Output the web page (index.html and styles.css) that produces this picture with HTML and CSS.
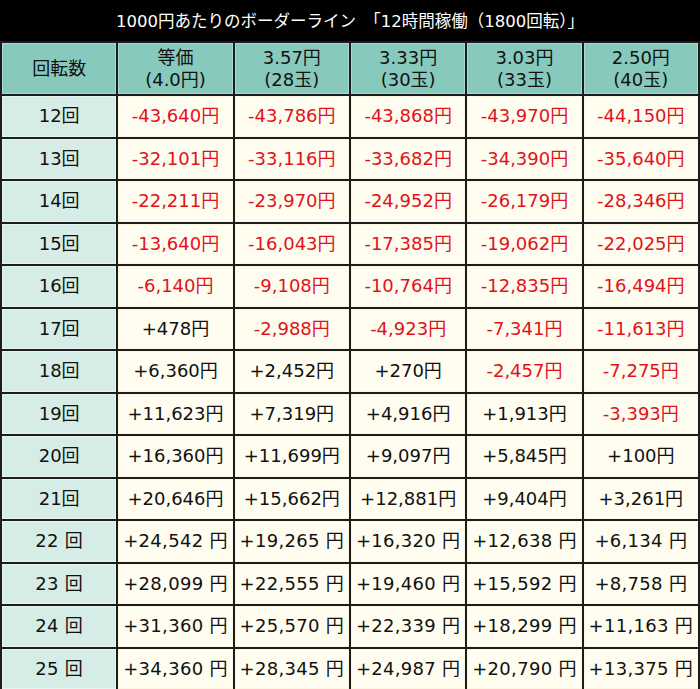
FILE: index.html
```html
<!DOCTYPE html>
<html lang="ja">
<head>
<meta charset="utf-8">
<link rel="stylesheet" href="styles.css">
</head>
<body>
<div class="wrap">
  <div class="title">1000円あたりのボーダーライン　「12時間稼働（1800回転）」</div>
  <table class="border">
    <thead>
      <tr>
        <th>回転数</th>
        <th>等価<br>(4.0円)</th>
        <th>3.57円<br>(28玉)</th>
        <th>3.33円<br>(30玉)</th>
        <th>3.03円<br>(33玉)</th>
        <th>2.50円<br>(40玉)</th>
      </tr>
    </thead>
    <tbody>
      <tr><td class="rot">12回</td><td class="neg">-43,640円</td><td class="neg">-43,786円</td><td class="neg">-43,868円</td><td class="neg">-43,970円</td><td class="neg">-44,150円</td></tr>
      <tr><td class="rot">13回</td><td class="neg">-32,101円</td><td class="neg">-33,116円</td><td class="neg">-33,682円</td><td class="neg">-34,390円</td><td class="neg">-35,640円</td></tr>
      <tr><td class="rot">14回</td><td class="neg">-22,211円</td><td class="neg">-23,970円</td><td class="neg">-24,952円</td><td class="neg">-26,179円</td><td class="neg">-28,346円</td></tr>
      <tr><td class="rot">15回</td><td class="neg">-13,640円</td><td class="neg">-16,043円</td><td class="neg">-17,385円</td><td class="neg">-19,062円</td><td class="neg">-22,025円</td></tr>
      <tr><td class="rot">16回</td><td class="neg">-6,140円</td><td class="neg">-9,108円</td><td class="neg">-10,764円</td><td class="neg">-12,835円</td><td class="neg">-16,494円</td></tr>
      <tr><td class="rot">17回</td><td>+478円</td><td class="neg">-2,988円</td><td class="neg">-4,923円</td><td class="neg">-7,341円</td><td class="neg">-11,613円</td></tr>
      <tr><td class="rot">18回</td><td>+6,360円</td><td>+2,452円</td><td>+270円</td><td class="neg">-2,457円</td><td class="neg">-7,275円</td></tr>
      <tr><td class="rot">19回</td><td>+11,623円</td><td>+7,319円</td><td>+4,916円</td><td>+1,913円</td><td class="neg">-3,393円</td></tr>
      <tr><td class="rot">20回</td><td>+16,360円</td><td>+11,699円</td><td>+9,097円</td><td>+5,845円</td><td>+100円</td></tr>
      <tr><td class="rot">21回</td><td>+20,646円</td><td>+15,662円</td><td>+12,881円</td><td>+9,404円</td><td>+3,261円</td></tr>
      <tr class="wide"><td class="rot">22 回</td><td>+24,542 円</td><td>+19,265 円</td><td>+16,320 円</td><td>+12,638 円</td><td>+6,134 円</td></tr>
      <tr class="wide"><td class="rot">23 回</td><td>+28,099 円</td><td>+22,555 円</td><td>+19,460 円</td><td>+15,592 円</td><td>+8,758 円</td></tr>
      <tr class="wide"><td class="rot">24 回</td><td>+31,360 円</td><td>+25,570 円</td><td>+22,339 円</td><td>+18,299 円</td><td>+11,163 円</td></tr>
      <tr class="wide"><td class="rot">25 回</td><td>+34,360 円</td><td>+28,345 円</td><td>+24,987 円</td><td>+20,790 円</td><td>+13,375 円</td></tr>
    </tbody>
  </table>
</div>
</body>
</html>
```
FILE: styles.css
```css
html, body {
  margin: 0;
  padding: 0;
  background: #1c1c1c;
}
.wrap {
  width: 700px;
  height: 689px;
  overflow: hidden;
  font-family: "DejaVu Sans", "Noto Sans CJK JP", sans-serif;
}
.title {
  height: 41px;
  background: #000;
  color: #fff;
  font-size: 16.5px;
  line-height: 41px;
  text-align: center;
  padding-top: 1px;
  box-sizing: border-box;
}
.border {
  width: 700px;
  border-collapse: separate;
  border-spacing: 2px;
  background: #1c1c1c;
  table-layout: fixed;
}
.border th,
.border td {
  padding: 0;
  text-align: center;
  box-sizing: border-box;
  color: #111;
  font-size: 18px;
  white-space: nowrap;
}
.border th {
  height: 51px;
  background: #88c9bd;
  border: 1px solid #a4ddd2;
  font-weight: normal;
  line-height: 22px;
}
.border td {
  height: 40.5px;
  background: #fffdf0;
  border: 1px solid #fbf7e2;
  line-height: 22px;
}
.border td.rot {
  background: #d6ece7;
  border-color: #e4f4f0;
}
.border td.neg {
  color: #e0121c;
}
.border tr.wide td {
  letter-spacing: 0.3px;
}
```
